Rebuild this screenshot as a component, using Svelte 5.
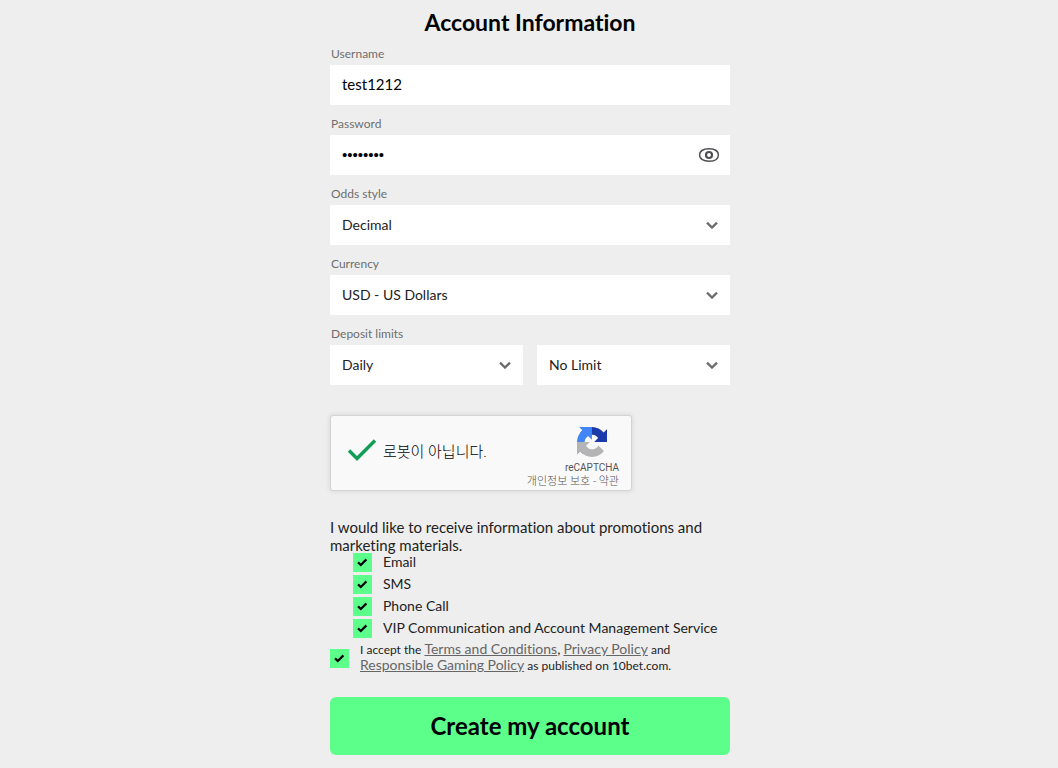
<script>
    let username = $state('test1212');
    let password = $state('test1212');
    let showPassword = $state(false);
    let oddsStyle = $state('Decimal');
    let currency = $state('USD - US Dollars');
    let limitPeriod = $state('Daily');
    let limitAmount = $state('No Limit');
    let notRobot = $state(true);
    let accepted = $state(true);

    let channels = $state([
        { id: 'email', name: 'Email', checked: true },
        { id: 'sms', name: 'SMS', checked: true },
        { id: 'phone', name: 'Phone Call', checked: true },
        { id: 'vip', name: 'VIP Communication and Account Management Service', checked: true }
    ]);

    const handleSubmit = (e) => {
        e.preventDefault();
    };
</script>

{#snippet chevron()}
    <svg class="chevron" width="12" height="8" viewBox="0 0 12 8" aria-hidden="true">
        <path d="M1 1.6 L6 6.6 L11 1.6" fill="none" stroke="#6d6a6b" stroke-width="2.2" />
    </svg>
{/snippet}

{#snippet tick()}
    <svg class="mark" width="11" height="9" viewBox="0 0 11 9" aria-hidden="true">
        <path d="M1 4.4 L3.8 7 L9.4 1.4" fill="none" stroke="#000" stroke-width="2.2" />
    </svg>
{/snippet}

<main class="page">
    <form class="form" onsubmit={handleSubmit}>
        <h1>Account Information</h1>

        <div class="field">
            <label for="username">Username</label>
            <input id="username" class="control text" type="text" bind:value={username} />
        </div>

        <div class="field">
            <label for="password">Password</label>
            <div class="stack">
                <input
                    id="password"
                    class="control text"
                    class:masked={!showPassword}
                    type={showPassword ? 'text' : 'password'}
                    value={password}
                    oninput={(e) => (password = e.currentTarget.value)}
                />
                <button
                    type="button"
                    class="eye"
                    aria-label="Show password"
                    onclick={() => (showPassword = !showPassword)}
                >
                    <svg width="22" height="16" viewBox="0 0 22 16" aria-hidden="true">
                        <path
                            d="M1.6 8 C1.6 3.8 5.8 1.8 11 1.8 S20.4 3.8 20.4 8 S16.2 14.2 11 14.2 S1.6 12.2 1.6 8 Z"
                            fill="none"
                            stroke="#4d4d52"
                            stroke-width="1.4"
                        />
                        <circle cx="11" cy="8" r="3" fill="none" stroke="#4d4d52" stroke-width="2.2" />
                    </svg>
                </button>
            </div>
        </div>

        <div class="field">
            <label for="odds">Odds style</label>
            <div class="stack">
                <select id="odds" class="control" bind:value={oddsStyle}>
                    <option>Decimal</option>
                </select>
                {@render chevron()}
            </div>
        </div>

        <div class="field">
            <label for="currency">Currency</label>
            <div class="stack">
                <select id="currency" class="control" bind:value={currency}>
                    <option>USD - US Dollars</option>
                </select>
                {@render chevron()}
            </div>
        </div>

        <div class="field">
            <label for="period">Deposit limits</label>
            <div class="limits">
                <div class="stack">
                    <select id="period" class="control" bind:value={limitPeriod}>
                        <option>Daily</option>
                    </select>
                    {@render chevron()}
                </div>
                <div class="stack">
                    <select class="control" aria-label="Limit amount" bind:value={limitAmount}>
                        <option>No Limit</option>
                    </select>
                    {@render chevron()}
                </div>
            </div>
        </div>

        <div class="captcha">
            <label class="robot">
                <span class="check plain">
                    <input type="checkbox" bind:checked={notRobot} />
                    <svg class="mark" width="30" height="24" viewBox="0 0 30 24" aria-hidden="true">
                        <path d="M2 12.5 L10 20.5 L28 2.5" fill="none" stroke="#0f9d58" stroke-width="3.4" />
                    </svg>
                </span>
                로봇이 아닙니다.
            </label>
            <div class="brand">
                <svg width="30" height="30" viewBox="0 0 64 64" aria-hidden="true">
                    <path
                        fill="#1c3aa9"
                        d="M64 31.955l-.033-1.37V4.687l-7.16 7.16C50.948 4.674 42.033.093 32.05.093c-10.4 0-19.622 4.96-25.458 12.64l11.736 11.86a15.55 15.55 0 0 1 4.754-5.334c2.05-1.6 4.952-2.906 8.968-2.906.485 0 .86.057 1.135.163 4.976.393 9.288 3.14 11.828 7.124l-8.307 8.307L64 31.953"
                    />
                    <path
                        fill="#4285f4"
                        d="M31.862.094l-1.37.033H4.594l7.16 7.16C4.58 13.147 0 22.06 0 32.046c0 10.4 4.96 19.622 12.64 25.458L24.5 45.768a15.55 15.55 0 0 1-5.334-4.754c-1.6-2.05-2.906-4.952-2.906-8.968 0-.485.057-.86.163-1.135.393-4.976 3.14-9.288 7.124-11.828l8.307 8.307L31.86.095"
                    />
                    <path
                        fill="#b4b4b4"
                        d="M.001 32.045l.033 1.37v25.898l7.16-7.16c5.86 7.173 14.774 11.754 24.76 11.754 10.4 0 19.622-4.96 25.458-12.64l-11.736-11.86a15.55 15.55 0 0 1-4.754 5.334c-2.05 1.6-4.952 2.906-8.968 2.906-.485 0-.86-.057-1.135-.163-4.976-.393-9.288-3.14-11.828-7.124l8.307-8.307c-10.522.04-22.4.066-27.295-.005"
                    />
                </svg>
                <span class="brand-name">reCAPTCHA</span>
                <span class="brand-links"><a href="#privacy">개인정보 보호</a> - <a href="#terms">약관</a></span>
            </div>
        </div>

        <p class="promo">I would like to receive information about promotions and marketing materials.</p>

        <div class="channels">
            {#each channels as channel (channel.id)}
                <label class="channel">
                    <span class="check">
                        <input type="checkbox" bind:checked={channel.checked} />
                        {@render tick()}
                    </span>
                    {channel.name}
                </label>
            {/each}
        </div>

        <div class="accept">
            <span class="check">
                <input id="accept" type="checkbox" bind:checked={accepted} />
                {@render tick()}
            </span>
            <label for="accept">
                I accept the <a href="#conditions">Terms and Conditions</a><span class="comma">,</span>
                <a href="#privacy-policy">Privacy Policy</a> and
                <a href="#gaming">Responsible Gaming Policy</a> as published on 10bet.com.
            </label>
        </div>

        <button type="submit" class="submit">Create my account</button>
    </form>
</main>

<style>
    :global(body) {
        background: #eee;
    }

    .page {
        padding: 0 14px 13px 16px;
        font-family: Lato, 'Noto Sans CJK KR', sans-serif;
        font-variant-ligatures: none;
        color: #222;
    }

    .form {
        display: flex;
        flex-direction: column;
        max-width: 400px;
        margin: 0 auto;
    }

    h1 {
        margin: 0;
        padding: 8px 0 11px;
        font-size: 23px;
        line-height: 28px;
        font-weight: 700;
        text-align: center;
        color: #000;
    }

    .field {
        display: flex;
        flex-direction: column;
        gap: 4px;
        margin-bottom: 12px;
    }

    .field label {
        padding-left: 1px;
        font-size: 12px;
        line-height: 14px;
        color: #6e6e6e;
    }

    .control {
        box-sizing: border-box;
        width: 100%;
        height: 40px;
        padding: 0 12px 2px;
        border: 0;
        border-radius: 0;
        background: #fff;
        appearance: none;
        font-family: inherit;
        font-size: 14px;
        color: #222;
    }

    .text {
        font-size: 15px;
        color: #000;
    }

    .masked {
        font-family: 'Liberation Sans', sans-serif;
    }

    /* control and its icon share one grid cell */
    .stack,
    .check {
        display: grid;
        align-items: center;
    }

    .stack > *,
    .check > * {
        grid-area: 1 / 1;
    }

    .chevron {
        justify-self: end;
        margin-right: 12px;
        pointer-events: none;
    }

    .eye {
        display: flex;
        justify-self: end;
        margin-right: 10px;
        padding: 0;
        border: 0;
        background: none;
        cursor: pointer;
    }

    .limits {
        display: grid;
        grid-template-columns: 1fr 1fr;
        gap: 14px;
    }

    .captcha {
        box-sizing: border-box;
        display: flex;
        justify-content: space-between;
        width: 100%;
        max-width: 302px;
        height: 76px;
        margin: 18px 0 27px;
        padding: 0 12px 0 16px;
        border: 1px solid #d3d3d3;
        border-radius: 3px;
        background: #f9f9f9;
        box-shadow: 0 0 4px 1px rgba(0, 0, 0, 0.08);
    }

    .robot {
        display: flex;
        align-items: center;
        gap: 6px;
        padding-bottom: 6px;
        font-family: Roboto, 'Noto Sans CJK KR', sans-serif;
        font-size: 15px;
        font-weight: 300;
        color: #000;
    }

    .brand {
        display: flex;
        flex-direction: column;
        align-items: flex-end;
        padding-top: 11px;
        font-family: Roboto, 'Noto Sans CJK KR', sans-serif;
        font-size: 10px;
        line-height: 14px;
        color: #555;
    }

    .brand svg {
        margin: 0 12px 4px 0;
    }

    .brand-links {
        font-size: 11px;
        font-weight: 300;
    }

    .brand-links a {
        color: inherit;
        text-decoration: none;
    }

    .promo {
        margin: 0;
        font-size: 15px;
        line-height: 18px;
    }

    .channels {
        display: flex;
        flex-direction: column;
        margin: -3px 0 3px;
        padding-left: 23px;
    }

    .channel {
        display: flex;
        align-items: center;
        gap: 11px;
        font-size: 14px;
        line-height: 22px;
    }

    .check {
        flex: none;
        justify-items: center;
    }

    .check input {
        width: 19px;
        height: 19px;
        margin: 0;
        appearance: none;
        background: #fff;
    }

    .check input:checked {
        background: #5cff8a;
    }

    .check.plain input {
        width: 30px;
        height: 24px;
        background: none;
    }

    .mark {
        pointer-events: none;
    }

    .check input:not(:checked) + .mark {
        visibility: hidden;
    }

    .accept {
        display: flex;
        align-items: center;
        gap: 11px;
        margin-bottom: 23px;
        font-size: 12px;
        line-height: 16px;
    }

    .accept a,
    .comma {
        font-size: 14px;
        line-height: 14px;
    }

    .accept a {
        color: #666;
    }

    .submit {
        height: 58px;
        padding: 0 12px 2px;
        border: 0;
        border-radius: 6px;
        background: #5cff8a;
        font-family: inherit;
        font-size: 24px;
        font-weight: 700;
        color: #000;
        cursor: pointer;
    }
</style>
